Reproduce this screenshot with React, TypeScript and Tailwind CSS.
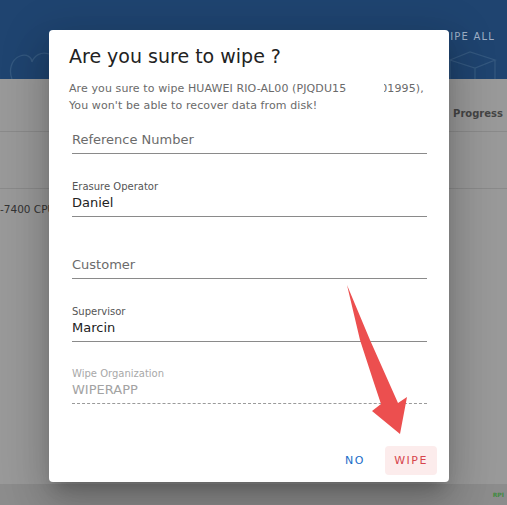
import React from "react";

const font = { fontFamily: '"DejaVu Sans", Verdana, sans-serif' };

function Field({
  label,
  value,
  placeholder,
  disabled,
  first,
}: {
  label?: string;
  value?: string;
  placeholder?: string;
  disabled?: boolean;
  first?: boolean;
}) {
  return (
    <div
      className={`${first ? "mt-[3px]" : "mt-[25.5px]"} h-[37px] flex flex-col ${
        disabled ? "border-b border-dashed border-[#9a9a9a]" : "border-b border-[#8a8a8a]"
      }`}
    >
      <div className={`h-[14px] text-[10px] leading-[14px] ${disabled ? "text-[#a8a8a8]" : "text-[#555]"}`}>
        {value ? label : ""}
      </div>
      <div
        className={`h-[18px] text-[13px] leading-[18px] ${
          disabled ? "text-[#a3a3a3]" : value ? "text-[#222]" : "text-[#6b6b6b]"
        }`}
      >
        {value ?? placeholder}
      </div>
    </div>
  );
}

export default function App() {
  return (
    <div className="relative w-[507px] h-[505px] overflow-hidden bg-[#999999]" style={font}>
      {/* Background page (dimmed) */}
      <div className="flex flex-col h-full">
        <header className="relative h-[79px] bg-[#1f4470] flex justify-end items-start">
          <span className="mt-[29px] mr-[12px] text-[10px] tracking-[1.2px] text-[#9fb0c7]">WIPE ALL</span>
          <svg className="absolute left-[8px] top-[48px]" width="48" height="31" viewBox="0 0 48 31">
            <path
              d="M4 31 C1 24 2 12 12 8 C19 5 24 10 24 14 C26 8 33 3 41 6 C47 8 47 14 45 18"
              fill="none"
              stroke="#34587f"
              strokeWidth="1.3"
            />
          </svg>
          <svg className="absolute left-[448px] top-[50px]" width="50" height="29" viewBox="0 0 50 29">
            <path
              d="M2 10 L22 2 L47 10 L27 18 Z M27 18 L27 29 M47 10 L47 29 M2 10 L2 29"
              fill="none"
              stroke="#34587f"
              strokeWidth="1.3"
            />
          </svg>
        </header>
        <div className="h-[53px] border-b border-[#8a8a8a] flex justify-end items-end">
          <span className="mb-[10px] mr-[4px] text-[10px] font-bold text-[#454545]">Progress</span>
        </div>
        <div className="h-[57px] border-b border-[#8a8a8a]" />
        <div className="pt-[13px] text-[10.5px] text-[#333]">-7400 CPU</div>
        <div className="flex-1" />
        <footer className="h-[21px] bg-[#8c8c8c] flex justify-end items-center pr-[3px]">
          <span className="text-[6px] font-bold text-[#3f8a3f]">RPI</span>
        </footer>
      </div>

      {/* Dialog overlay */}
      <div className="absolute inset-0">
        <div className="absolute left-[49px] top-[30px] w-[400px] h-[452px] bg-white rounded-[4px] shadow-[0_11px_15px_-7px_rgba(0,0,0,0.2),0_24px_38px_3px_rgba(0,0,0,0.14),0_9px_46px_8px_rgba(0,0,0,0.12)] flex flex-col">
          <h2 className="pl-[20px] pt-[10px] text-[19px] leading-[32px] text-[#222]">
            Are you sure to wipe ?
          </h2>
          <p className="pl-[20px] pr-[10px] mt-[8px] text-[11px] leading-[17px] text-[#6a6a6a] tracking-[0.1px]">
            <span className="whitespace-nowrap">
              Are you sure to wipe HUAWEI RIO-AL00 (PJQDU15
              <span className="inline-block w-[34px]" />
              <span className="relative">
                01995),
                <span className="absolute left-0 top-0 bottom-0 w-[4px] bg-white" />
              </span>
            </span>
            <br />
            You won't be able to recover data from disk!
          </p>
          <div className="pl-[23px] pr-[22px] flex flex-col">
            <Field first placeholder="Reference Number" label="Reference Number" />
            <Field label="Erasure Operator" value="Daniel" />
            <Field placeholder="Customer" label="Customer" />
            <Field label="Supervisor" value="Marcin" />
            <Field label="Wipe Organization" value="WIPERAPP" disabled />
          </div>
          <div className="flex-1" />
          <div className="flex justify-end items-center gap-[12px] pr-[12px] pb-[7px]">
            <button className="h-[29px] px-[8px] pt-[2px] text-[11px] tracking-[1.5px] text-[#1a6cc8]">NO</button>
            <button className="h-[29px] w-[52px] pt-[2px] rounded-[4px] bg-[#fcecec] text-[11px] tracking-[1.5px] text-[#d7444c]">
              WIPE
            </button>
          </div>
        </div>
        {/* Red annotation arrow */}
        <svg className="absolute left-0 top-0" width="507" height="505" viewBox="0 0 507 505">
          <polygon
            points="347,285 370,340 398,403 407,397 400,434 372,411 381,404 373,380 360,340"
            fill="#ec4f4f"
          />
        </svg>
      </div>
    </div>
  );
}
